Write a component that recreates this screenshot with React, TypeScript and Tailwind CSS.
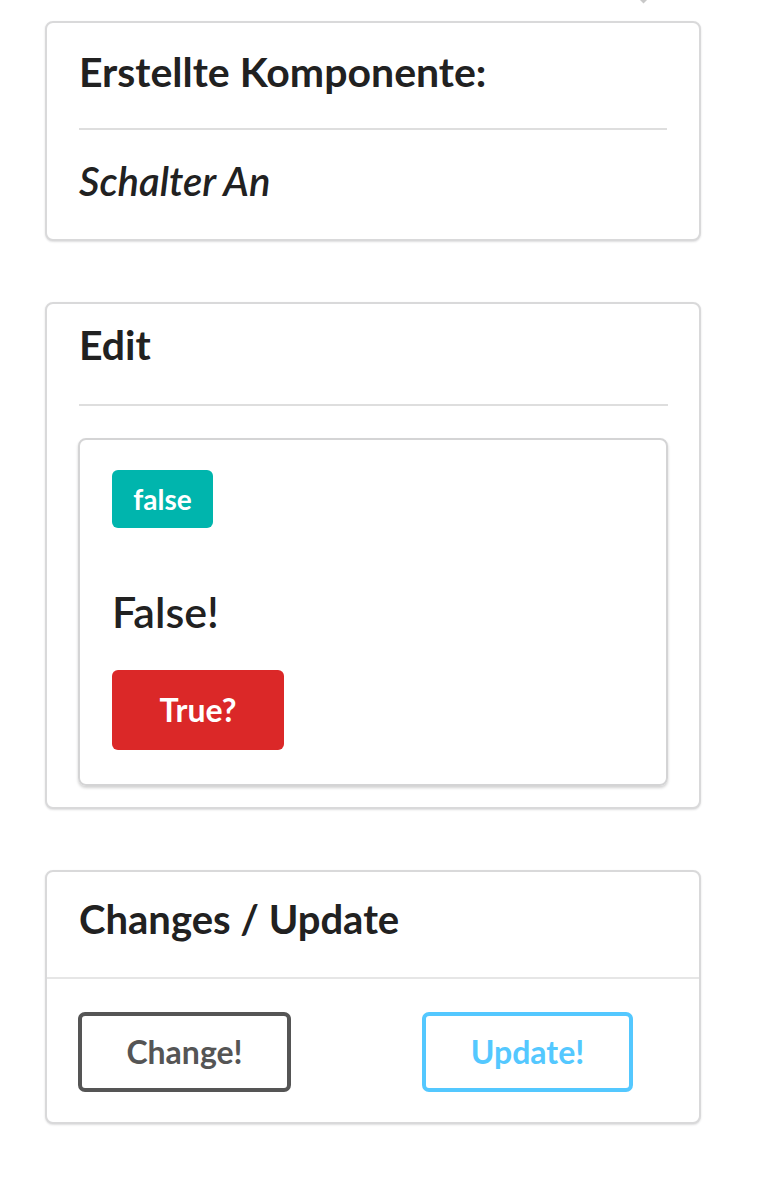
import React from 'react';

const font = { fontFamily: 'Lato, "Noto Sans", sans-serif' };

function Card({ children, className = '' }: { children: React.ReactNode; className?: string }) {
  return (
    <div
      className={`w-[656px] bg-white border-2 border-[#d9d9da] rounded-[8px] shadow-[0_1px_2px_rgba(34,36,38,0.15)] ${className}`}
    >
      {children}
    </div>
  );
}

export default function App() {
  return (
    <div className="min-h-screen bg-white text-[#212121]" style={font}>
      {/* bit of a dropdown arrow from above */}
      <div className="h-[21px] pl-[638px]">
        <svg width="11" height="4" viewBox="0 0 11 4">
          <path d="M2 0 L5.5 3.5 L9 0 Z" fill="#c8c8c8" />
        </svg>
      </div>

      <div className="pl-[45px] flex flex-col">
        <Card className="px-[32px] pt-[25px] pb-[34px]">
          <h2 className="text-[41px] leading-[48px] font-bold">Erstellte Komponente:</h2>
          <div className="h-[2px] bg-[#dedede] mt-[32px]" />
          <p className="mt-[27px] text-[40px] leading-[48px] font-semibold italic">Schalter An</p>
        </Card>

        <Card className="mt-[61px] px-[31px] pt-[17px] pb-[21px]">
          <h2 className="text-[41px] leading-[48px] font-bold pl-[1px]">Edit</h2>
          <div className="h-[2px] bg-[#dedede] mt-[35px] ml-[1px]" />
          <div className="mt-[32px] border-2 border-[#d4d4d5] rounded-[8px] shadow-[0_2px_3px_rgba(0,0,0,0.18)] px-[32px] pt-[30px] pb-[34px]">
            <div className="flex">
              <span className="h-[58px] w-[101px] flex items-center justify-center bg-[#00b5ad] text-white rounded-[6px] text-[28px] font-bold">
                false
              </span>
            </div>
            <p className="mt-[60px] text-[43px] leading-[48px] font-semibold">False!</p>
            <button className="mt-[34px] w-[172px] h-[80px] bg-[#db2828] text-white rounded-[6px] text-[32px] font-bold">
              True?
            </button>
          </div>
        </Card>

        <Card className="mt-[61px] pt-[23px] pb-[30px]">
          <h2 className="px-[32px] text-[40px] leading-[48px] font-bold">Changes / Update</h2>
          <div className="h-[2px] bg-[#e6e6e6] mt-[34px]" />
          <div className="mt-[33px] pl-[31px] flex">
            <button className="w-[213px] h-[80px] border-4 border-[#555555] text-[#555555] rounded-[7px] text-[32px] font-bold">
              Change!
            </button>
            <button className="ml-[131px] w-[211px] h-[80px] border-4 border-[#54c8ff] text-[#54c8ff] rounded-[7px] text-[32px] font-bold">
              Update!
            </button>
          </div>
        </Card>
      </div>
    </div>
  );
}
